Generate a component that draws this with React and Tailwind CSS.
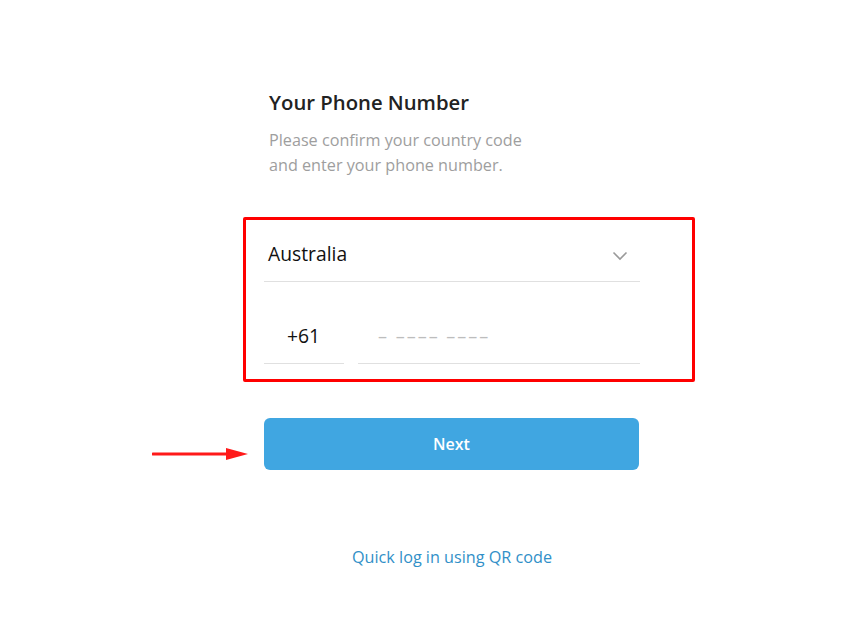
import React from 'react';

const App = () => {
    return (
        <div className="w-[845px] h-[624px] bg-white font-['Open_Sans',sans-serif] pt-[88px]">
            <div className="ml-[264px] w-[376px] flex flex-col">
                <h1 className="pl-[5px] text-[20.3px] leading-[28px] font-semibold text-[#222222]">Your Phone Number</h1>
                <p className="pl-[5px] mt-[12px] text-[16.2px] leading-[25px] text-[#9e9e9e]">
                    Please confirm your country code
                    <br />
                    and enter your phone number.
                </p>
            </div>

            {/* highlighted fields */}
            <div className="ml-[243px] mt-[39px] w-[452px] border-[3px] border-[#ff0000] rounded-[2px] pl-[18px] pr-[52px] pb-[15px]">
                <div className="flex items-center justify-between border-b border-[#e0e0e0] pt-[21px] pb-[14px] pl-[4px] pr-[12px]">
                    <span className="text-[19.3px] leading-[26px] text-[#111111]">Australia</span>
                    <svg width="16" height="10" viewBox="0 0 16 10" className="mt-[4px]">
                        <path d="M1.5 1.5 L8 8 L14.5 1.5" fill="none" stroke="#9a9a9a" strokeWidth="1.6" />
                    </svg>
                </div>
                <div className="flex mt-[28px] gap-[14px]">
                    <div className="w-[80px] h-[54px] border-b border-[#e0e0e0] flex items-center pl-[23px] text-[19.3px] text-[#111111]">
                        +61
                    </div>
                    <div className="flex-1 h-[54px] border-b border-[#e0e0e0] flex items-center pl-[20px] text-[18px] text-[#bdbdbd] tracking-[2px]">
                        – –––– ––––
                    </div>
                </div>
            </div>

            <div className="flex items-start mt-[36px] pl-[152px]">
                <svg width="96" height="14" viewBox="0 0 96 14" className="mt-[29px]">
                    <line x1="1" y1="7" x2="80" y2="7" stroke="#ff1a1a" strokeWidth="3" strokeLinecap="round" />
                    <path d="M74 1 L96 7 L74 13 Z" fill="#ff1a1a" />
                </svg>
                <button
                    type="button"
                    className="ml-[16px] w-[375px] h-[52px] rounded-[6px] bg-[#40a6e1] text-white text-[16px] font-semibold"
                >
                    Next
                </button>
            </div>

            <div className="ml-[264px] w-[376px] mt-[75px] text-center">
                <span className="text-[16.2px] leading-[24px] text-[#3190c8]">Quick log in using QR code</span>
            </div>
        </div>
    );
};

export default App;
